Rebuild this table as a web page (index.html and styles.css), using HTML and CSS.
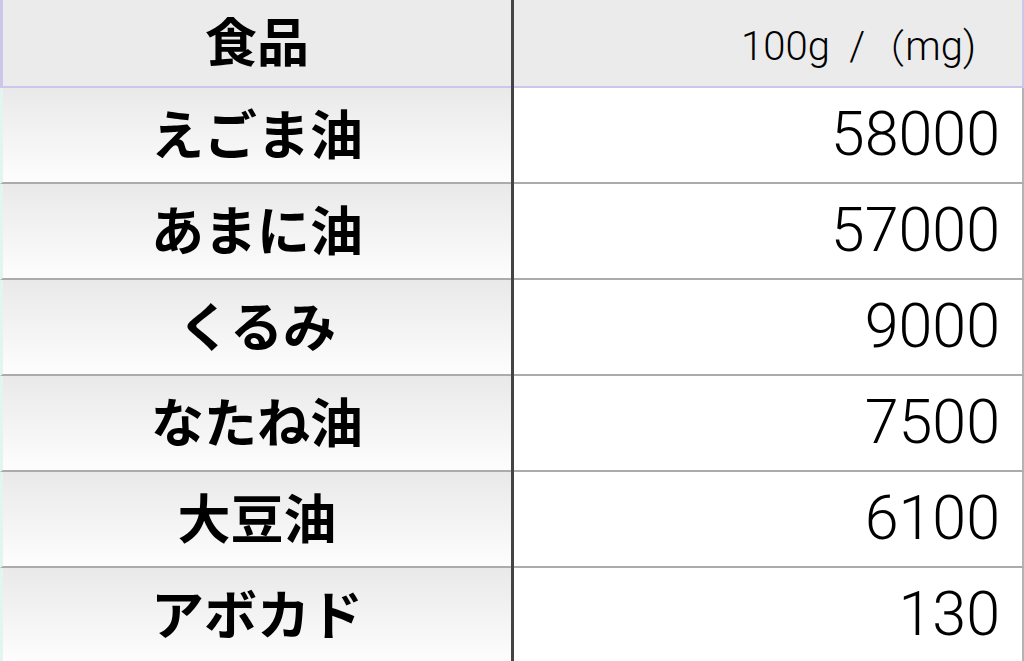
FILE: index.html
```html
<!DOCTYPE html>
<html lang="ja">
<head>
<meta charset="utf-8">
<title>食品</title>
<link rel="stylesheet" href="styles.css">
</head>
<body>
<div class="table">
  <div class="col col-name">
    <div class="cell head name">食品</div>
    <div class="cell name">えごま油</div>
    <div class="cell name">あまに油</div>
    <div class="cell name">くるみ</div>
    <div class="cell name">なたね油</div>
    <div class="cell name">大豆油</div>
    <div class="cell name last">アボカド</div>
  </div>
  <div class="divider"></div>
  <div class="col col-value">
    <div class="cell head value unit">100g  /<span class="cjk">（</span>mg)</div>
    <div class="cell value">58000</div>
    <div class="cell value">57000</div>
    <div class="cell value">9000</div>
    <div class="cell value">7500</div>
    <div class="cell value">6100</div>
    <div class="cell value last">130</div>
  </div>
</div>
</body>
</html>
```
FILE: styles.css
```css
html, body {
  margin: 0;
  padding: 0;
  background: #ffffff;
}
body {
  width: 1024px;
  height: 661px;
  overflow: hidden;
  font-family: "Noto Sans CJK JP", "Noto Sans", sans-serif;
  color: #000;
}
.table {
  display: flex;
  align-items: stretch;
  height: 661px;
}
.col {
  display: flex;
  flex-direction: column;
}
.col-name {
  width: 511px;
}
.col-value {
  flex: 1;
}
.divider {
  width: 3px;
  background: #444444;
}
.cell {
  box-sizing: border-box;
  height: 96px;
  display: flex;
  align-items: center;
  border-bottom: 2px solid #ababab;
  flex: none;
}
.cell.head {
  height: 88px;
  background: #ebebeb;
  border-bottom: 2px solid #cdc6ea;
}
.cell.last {
  flex: 1;
  border-bottom: none;
}
.name {
  justify-content: center;
  font-weight: 700;
  font-size: 53px;
  border-left: 3px solid #e3f5f0;
  background: linear-gradient(#e9e9e9, #fdfdfd);
  padding-bottom: 6px;
}
.name.head {
  border-left: 3px solid #cdc6ea;
  background: #ebebeb;
  font-size: 52px;
  padding-bottom: 8px;
}
.value {
  justify-content: flex-end;
  font-family: Roboto, "Noto Sans CJK JP", sans-serif;
  font-weight: 300;
  font-size: 61px;
  padding-right: 22px;
  border-right: 2px solid #b3b3b3;
  padding-bottom: 2px;
}
.value.unit {
  font-size: 40px;
  white-space: pre;
  padding-right: 46px;
  border-right: 2px solid #cdc6ea;
  padding-bottom: 0;
  padding-top: 6px;
}
.cjk {
  font-family: "Noto Sans CJK JP", sans-serif;
  font-weight: 300;
}
```
